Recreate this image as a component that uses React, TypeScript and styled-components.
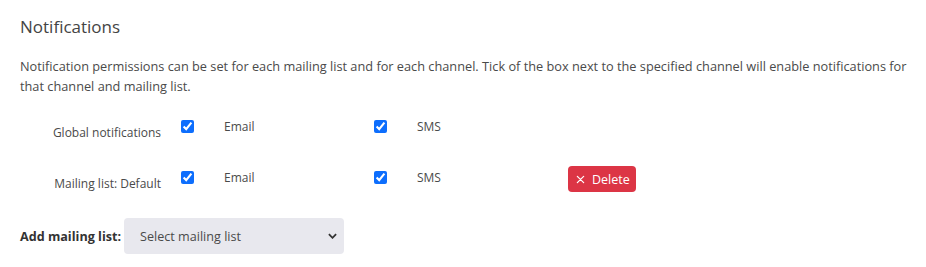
import React from 'react';
import styled, { createGlobalStyle } from 'styled-components';

const GlobalStyle = createGlobalStyle`
  html, body {
    margin: 0;
    padding: 0;
    background: #ffffff;
  }
  body {
    font-family: 'Open Sans', 'Liberation Sans', sans-serif;
    color: #4a4a4a;
  }
`;

const Page = styled.div`
  width: 926px;
  height: 267px;
  padding: 14px 8px 0 20px;
  box-sizing: border-box;
  overflow: hidden;
`;

const Title = styled.h2`
  margin: 0;
  font-size: 17px;
  font-weight: 400;
  line-height: 26px;
  color: #444;
`;

const Intro = styled.p`
  margin: 16px 0 0 0;
  font-size: 12.75px;
  line-height: 20px;
  color: #4a4a4a;
`;

const Grid = styled.div`
  display: grid;
  grid-template-columns: 141px 193px 194px auto;
  row-gap: 27px;
  column-gap: 0;
  margin-top: 22px;
  align-items: start;
`;

const RowLabel = styled.div`
  text-align: right;
  padding-top: 6px;
  font-size: 12px;
  line-height: 18px;
  color: #4a4a4a;
`;

const Channel = styled.label`
  display: flex;
  align-items: flex-start;
  gap: 30px;
  padding-left: 20px;
  font-size: 12px;
  line-height: 18px;
  color: #4a4a4a;
`;

const Check = styled.input.attrs({ type: 'checkbox' })`
  width: 13px;
  height: 13px;
  margin: 2px 0 0 0;
  accent-color: #0d6efd;
`;

const Actions = styled.div`
  padding-left: 20px;
  margin-top: -3px;
`;

const DeleteButton = styled.button`
  display: inline-flex;
  align-items: center;
  gap: 7px;
  height: 26px;
  padding: 0 6px 0 8px;
  border: none;
  border-radius: 4px;
  background: #dc3545;
  color: #fff;
  font-family: 'Open Sans', 'Liberation Sans', sans-serif;
  font-size: 12.5px;
  cursor: pointer;
`;

const AddRow = styled.div`
  display: flex;
  align-items: center;
  gap: 3px;
  margin-top: 25px;
`;

const AddLabel = styled.span`
  font-size: 12.6px;
  font-weight: 700;
  color: #333;
`;

const SelectBox = styled.div`
  position: relative;
  width: 220px;
  height: 36px;
`;

const Select = styled.select`
  appearance: none;
  width: 100%;
  height: 100%;
  padding: 0 30px 0 16px;
  border: none;
  border-radius: 4px;
  background: #e8e8ee;
  font-family: 'Open Sans', 'Liberation Sans', sans-serif;
  font-size: 12.6px;
  color: #4a4a4a;
`;

const Chevron = styled.svg`
  position: absolute;
  right: 7px;
  top: 15px;
  pointer-events: none;
`;

const X = () => (
  <svg width="9" height="9" viewBox="0 0 10 10">
    <path d="M1.5 1.5L8.5 8.5M8.5 1.5L1.5 8.5" stroke="#fff" strokeWidth="1.4" strokeLinecap="round" />
  </svg>
);

const rows = [
  { label: 'Global notifications', deletable: false },
  { label: 'Mailing list: Default', deletable: true },
];

export default function App() {
  return (
    <Page>
      <GlobalStyle />
      <Title>Notifications</Title>
      <Intro>
        Notification permissions can be set for each mailing list and for each channel. Tick of the box next to the
        specified channel will enable notifications for that channel and mailing list.
      </Intro>
      <Grid>
        {rows.map((r) => (
          <React.Fragment key={r.label}>
            <RowLabel>{r.label}</RowLabel>
            <Channel>
              <Check defaultChecked />
              Email
            </Channel>
            <Channel>
              <Check defaultChecked />
              SMS
            </Channel>
            <Actions>
              {r.deletable && (
                <DeleteButton>
                  <X />
                  Delete
                </DeleteButton>
              )}
            </Actions>
          </React.Fragment>
        ))}
      </Grid>
      <AddRow>
        <AddLabel>Add mailing list:</AddLabel>
        <SelectBox>
          <Select defaultValue="">
            <option value="">Select mailing list</option>
          </Select>
          <Chevron width="9" height="6" viewBox="0 0 10 6">
            <path d="M1 1l4 4 4-4" stroke="#333" strokeWidth="2" fill="none" />
          </Chevron>
        </SelectBox>
      </AddRow>
    </Page>
  );
}
